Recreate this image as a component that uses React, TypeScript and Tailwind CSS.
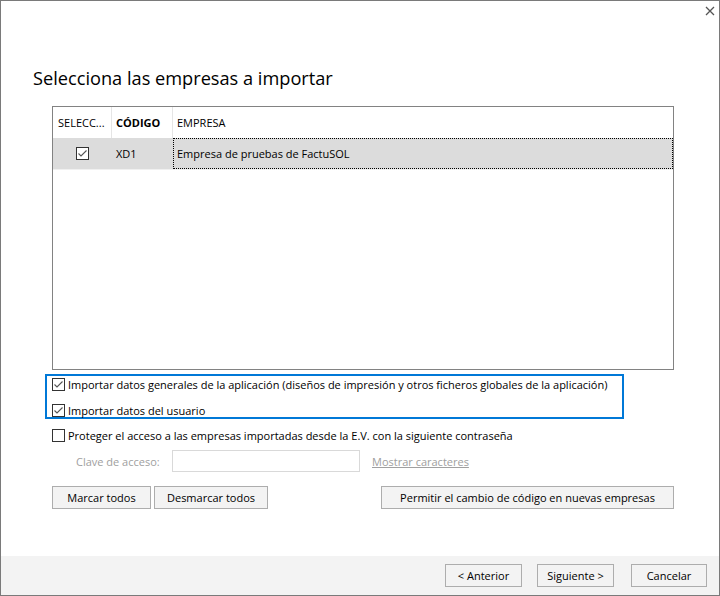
import React, { useState } from "react";

const font = { fontFamily: '"Open Sans", "Noto Sans", sans-serif' };

type CheckProps = {
  checked: boolean;
  onChange?: () => void;
};

const Check = ({ checked, onChange }: CheckProps) => (
  <span
    onClick={onChange}
    className="w-[13px] h-[13px] shrink-0 border border-[#333333] bg-white flex items-center justify-center"
  >
    {checked ? (
      <svg width="11" height="11" viewBox="0 0 11 11">
        <path d="M1.5 5.5 L4 8 L9.5 2.5" fill="none" stroke="#555555" strokeWidth="1.1" />
      </svg>
    ) : null}
  </span>
);

const Btn = ({ label, className }: { label: string; className?: string }) => (
  <button
    className={
      "h-[23px] border border-[#adadad] bg-[#f3f3f3] text-[11px] text-black leading-none whitespace-nowrap flex items-center justify-center " +
      (className || "")
    }
  >
    {label}
  </button>
);

const App = () => {
  const [sel, setSel] = useState(true);
  const [generales, setGenerales] = useState(true);
  const [usuario, setUsuario] = useState(true);
  const [proteger, setProteger] = useState(false);

  return (
    <div
      style={font}
      className="w-[720px] h-[596px] border border-[#7a7a7a] bg-white flex flex-col text-[11px] leading-[15px] text-black whitespace-nowrap"
    >
      <div className="flex-1 flex flex-col">
        <div className="h-[19px] flex justify-end pr-[4px] pt-[5px]">
          <svg width="10" height="10" viewBox="0 0 10 10">
            <path d="M1 1 L9 9 M9 1 L1 9" stroke="#555555" strokeWidth="1.3" />
          </svg>
        </div>

        <h1 className="mt-[46px] ml-[32px] h-[24px] leading-[24px] text-[18.2px] text-black">
          Selecciona las empresas a importar
        </h1>

        {/* grid */}
        <div className="mt-[16px] ml-[51px] w-[622px] h-[264px] border border-[#828282] flex flex-col">
          <div className="h-[31px] flex items-center">
            <div className="w-[59px] h-full border-r border-[#e5e5e5] pl-[5px] flex items-center">SELECC...</div>
            <div className="w-[61px] h-full border-r border-[#e5e5e5] pl-[4px] flex items-center font-bold">CÓDIGO</div>
            <div className="flex-1 h-full pl-[4px] flex items-center">EMPRESA</div>
          </div>
          <div className="h-[32px] bg-[#dcdcdc] flex items-center border-b border-[#f0f0f0]">
            <div className="w-[59px] h-full flex items-center justify-center">
              <Check checked={sel} onChange={() => setSel(!sel)} />
            </div>
            <div className="w-[61px] h-full pl-[4px] flex items-center">XD1</div>
            <div className="flex-1 h-full pl-[3px] flex items-center border border-dotted border-black">
              Empresa de pruebas de FactuSOL
            </div>
          </div>
        </div>

        <div className="ml-[44px] mt-[4px] w-[579px] h-[45px] border-2 border-[#0078d7] pl-[5px] pt-[2px] flex flex-col gap-[13px]">
          <label className="h-[13px] flex items-center gap-[3px]">
            <Check checked={generales} onChange={() => setGenerales(!generales)} />
            <span>
              Importar datos generales de la aplicación (diseños de impresión y otros ficheros globales de la aplicación)
            </span>
          </label>
          <label className="h-[13px] flex items-center gap-[3px]">
            <Check checked={usuario} onChange={() => setUsuario(!usuario)} />
            <span>Importar datos del usuario</span>
          </label>
        </div>

        <label className="ml-[51px] mt-[10px] h-[13px] flex items-center gap-[3px]">
          <Check checked={proteger} onChange={() => setProteger(!proteger)} />
          <span>Proteger el acceso a las empresas importadas desde la E.V. con la siguiente contraseña</span>
        </label>

        <div className="ml-[75px] mt-[8px] h-[22px] flex items-center text-[#a0a0a0]">
          <span className="w-[96px]">Clave de acceso:</span>
          <div className="w-[188px] h-[22px] border border-[#d9d9d9] bg-white" />
          <span className="ml-[12px] underline">Mostrar caracteres</span>
        </div>

        <div className="ml-[51px] mt-[14px] w-[622px] flex items-center">
          <Btn label="Marcar todos" className="w-[99px]" />
          <Btn label="Desmarcar todos" className="ml-[3px] w-[114px]" />
          <Btn label="Permitir el cambio de código en nuevas empresas" className="ml-auto w-[293px]" />
        </div>
      </div>

      <div className="h-[39px] bg-[#f3f3f3] flex justify-end items-start pt-[8px] pr-[12px]">
        <Btn label="< Anterior" className="w-[77px]" />
        <Btn label="Siguiente >" className="ml-[15px] w-[77px]" />
        <Btn label="Cancelar" className="ml-[17px] w-[76px]" />
      </div>
    </div>
  );
};

export default App;
